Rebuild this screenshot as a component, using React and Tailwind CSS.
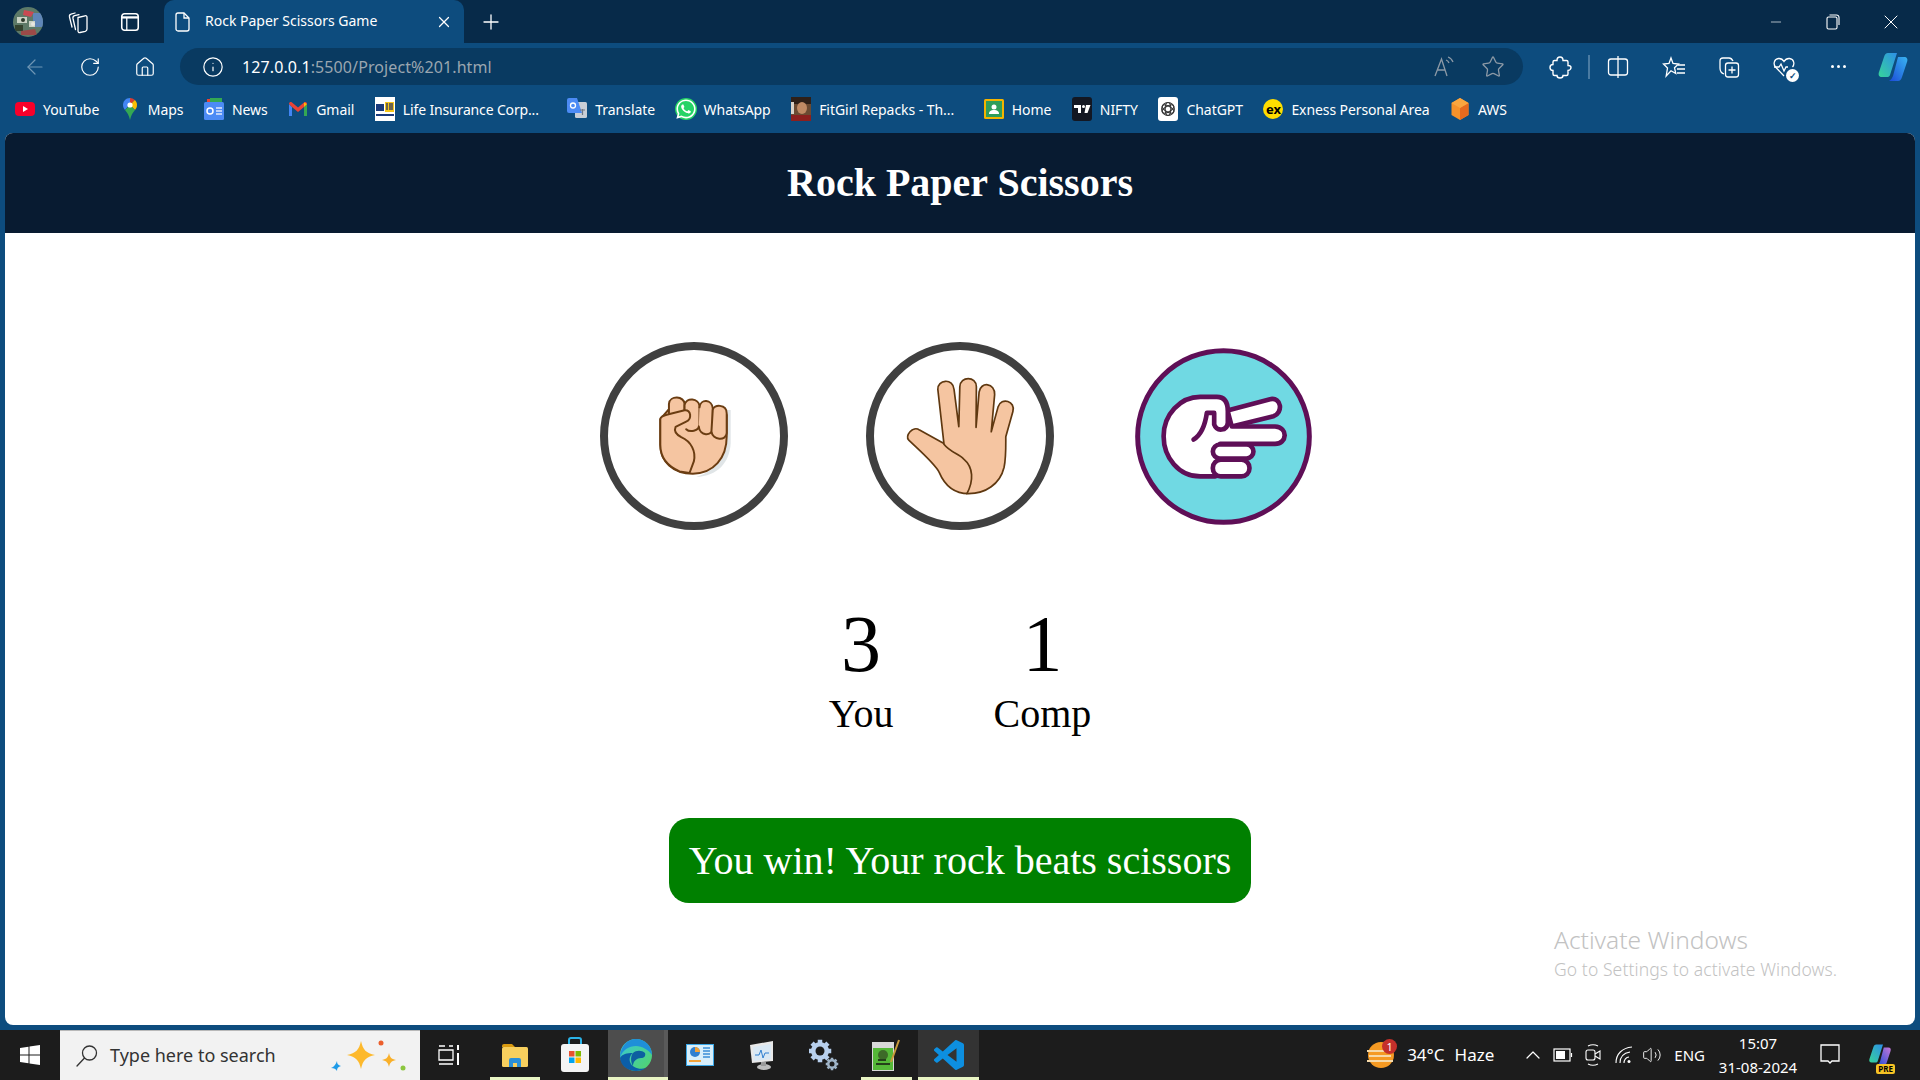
import {
  ArrowLeft,
  RotateCw,
  House,
  Info,
  Star,
  X,
  Plus,
  Minus,
  ChevronUp,
  Volume2,
} from "lucide-react";
import { FaWhatsapp } from "react-icons/fa";

const bookmarks = [
  { label: "YouTube", icon: <YouTubeIcon /> },
  { label: "Maps", icon: <MapsIcon /> },
  { label: "News", icon: <NewsIcon /> },
  { label: "Gmail", icon: <GmailIcon /> },
  { label: "Life Insurance Corp...", icon: <LicIcon />, labelClass: "w-[144px] tracking-[-0.15px]" },
  { label: "Translate", icon: <TranslateIcon /> },
  { label: "WhatsApp", icon: <WhatsAppIcon /> },
  { label: "FitGirl Repacks - Th...", icon: <FitGirlIcon />, labelClass: "w-[144px]" },
  { label: "Home", icon: <ClassroomIcon /> },
  { label: "NIFTY", icon: <NiftyIcon /> },
  { label: "ChatGPT", icon: <ChatGptIcon /> },
  { label: "Exness Personal Area", icon: <ExnessIcon />, labelClass: "tracking-[-0.1px]" },
  { label: "AWS", icon: <AwsIcon /> },
];

function YouTubeIcon() {
  return (
    <svg viewBox="0 0 20 20" className="h-5 w-5">
      <rect x="0" y="3" width="20" height="14" rx="4" fill="#f8002a" />
      <path d="M8 7l5 3-5 3z" fill="#fff" />
    </svg>
  );
}

function MapsIcon() {
  return (
    <svg viewBox="0 0 20 24" className="h-6 w-5">
      <path d="M10 1C5.500 1 3 4.400 3 8c0 2 .9 3.600 2 5l5-6 1-6z" fill="#4285f4" />
      <path d="M10 1c1.800 0 3.600.7 4.800 2L10 8z" fill="#d93a30" />
      <path d="M14.800 3C16.300 4.200 17 6 17 8c0 2-.8 3.500-2 5l-5-5z" fill="#fbbc04" />
      <path d="M5 13l5-5 5 5c-2 2.600-4 5-5 10-1-5-3-7.400-5-10z" fill="#34a853" />
      <circle cx="10" cy="8" r="2.600" fill="#fff" />
    </svg>
  );
}

function NewsIcon() {
  return (
    <svg viewBox="0 0 20 24" className="h-6 w-5">
      <path d="M3 2h14v6H3z" fill="#ea4335" />
      <path d="M6 1h12v5H6z" fill="#34a853" />
      <rect x="0" y="5" width="20" height="18" rx="1.500" fill="#4c8bf5" />
      <circle cx="6" cy="14" r="3" fill="none" stroke="#fff" strokeWidth="1.500" />
      <path d="M12 11h6M12 14h6M12 17h6" stroke="#dfe9fb" strokeWidth="1.500" />
    </svg>
  );
}

function GmailIcon() {
  return (
    <svg viewBox="0 0 20 20" className="h-5 w-5">
      <path d="M1 5v12h3V8z" fill="#4285f4" />
      <path d="M16 8v9h3V5z" fill="#34a853" />
      <path d="M1 5c0-2 2-2.500 3-1.500l6 5 6-5c1-1 3-.5 3 1.500l-3 3-6 5-6-5z" fill="#ea4335" />
      <path d="M16 3.500L19 5l-3 3z" fill="#fbbc04" />
    </svg>
  );
}

function LicIcon() {
  return (
    <svg viewBox="0 0 20 24" className="h-6 w-5">
      <rect width="20" height="24" fill="#fff" />
      <rect x="1" y="7" width="8" height="7" fill="#1a3a7c" />
      <rect x="10" y="5" width="9" height="10" fill="#f5c518" />
      <path d="M12 6v7M15 6v7M17 6v7" stroke="#22306b" strokeWidth="1.300" />
      <rect x="1" y="17" width="18" height="2" fill="#1a3a7c" />
    </svg>
  );
}

function TranslateIcon() {
  return (
    <svg viewBox="0 0 20 24" className="h-6 w-5">
      <rect x="8" y="5" width="12" height="16" rx="1.500" fill="#c9ced6" />
      <path d="M0 3a2 2 0 012-2h8l5 15H2a2 2 0 01-2-2z" fill="#4c8bf5" />
      <circle cx="6" cy="8.500" r="2.500" fill="none" stroke="#fff" strokeWidth="1.300" />
      <path d="M13 13h5M15.500 12v6" stroke="#6f7782" strokeWidth="1.200" />
    </svg>
  );
}

function WhatsAppIcon() {
  return (
    <div className="flex h-[22px] w-[22px] items-center justify-center rounded-full bg-[#25d366]">
      <FaWhatsapp className="h-[22px] w-[22px] text-white" />
    </div>
  );
}

function FitGirlIcon() {
  return (
    <svg viewBox="0 0 20 24" className="h-6 w-5">
      <rect width="20" height="24" fill="#6b4a32" />
      <rect y="0" width="20" height="7" fill="#2f2018" />
      <ellipse cx="11" cy="11" rx="5" ry="6" fill="#c08a64" />
      <rect x="0" y="18" width="20" height="6" fill="#8c1f1e" />
      <rect x="0" y="5" width="3" height="12" fill="#d9d2c8" />
    </svg>
  );
}

function ClassroomIcon() {
  return (
    <svg viewBox="0 0 20 20" className="h-5 w-5">
      <rect width="20" height="20" rx="1.500" fill="#f4b400" />
      <rect x="2" y="2" width="16" height="16" fill="#2f9e5b" />
      <circle cx="10" cy="8" r="2.500" fill="#fff" />
      <path d="M5 15c0-3 2-4 5-4s5 1 5 4z" fill="#fff" />
    </svg>
  );
}

function NiftyIcon() {
  return (
    <div className="flex h-6 w-5 items-center justify-center rounded-[3px] bg-[#131722]">
      <svg viewBox="0 0 20 24" className="h-6 w-5">
        <path d="M2 8h7v8H6v-5H2z" fill="#fff" />
        <circle cx="11.500" cy="9.500" r="1.500" fill="#fff" />
        <path d="M14 8h4.500l-3 8h-3z" fill="#fff" />
      </svg>
    </div>
  );
}

function ChatGptIcon() {
  return (
    <div className="flex h-6 w-5 items-center justify-center rounded-[3px] bg-white">
      <svg viewBox="0 0 20 20" className="h-4 w-4" fill="none" stroke="#333" strokeWidth="1.300">
        <circle cx="10" cy="10" r="8" />
        <ellipse cx="10" cy="10" rx="3.500" ry="8" />
        <ellipse cx="10" cy="10" rx="3.500" ry="8" transform="rotate(60 10 10)" />
        <ellipse cx="10" cy="10" rx="3.500" ry="8" transform="rotate(120 10 10)" />
      </svg>
    </div>
  );
}

function ExnessIcon() {
  return (
    <div className="flex h-5 w-5 items-center justify-center rounded-full bg-[#ffdd00] text-[13px] leading-none font-bold text-black">
      ex
    </div>
  );
}

function AwsIcon() {
  return (
    <svg viewBox="0 0 20 24" className="h-6 w-5">
      <path d="M10 1l8.500 5v12L10 23l-8.500-5V6z" fill="#f7922a" />
      <path d="M10 11l8.500-5v12L10 23z" fill="#e76a1f" />
      <path d="M10 1l8.500 5L10 11 1.500 6z" fill="#fba63f" />
    </svg>
  );
}

function AvatarIcon() {
  return (
    <svg viewBox="0 0 30 30" className="h-[30px] w-[30px]">
      <defs>
        <clipPath id="avatarclip">
          <circle cx="15" cy="15" r="15" />
        </clipPath>
      </defs>
      <g clipPath="url(#avatarclip)">
        <rect width="30" height="30" fill="#5d7a68" />
        <rect x="20" y="6" width="10" height="14" fill="#5f86b8" />
        <path d="M11 3l10 2-3 5-8-2z" fill="#c94a52" />
        <path d="M4 10h10v6H4zM16 14h6v6h-6z" fill="#c9d2c4" />
        <path d="M2 18h8v6H2z" fill="#33432f" />
        <path d="M8 24l14-2 2 6H8z" fill="#9c4a48" />
        <circle cx="10" cy="13" r="2" fill="#2e3a2c" />
        <circle cx="20" cy="17" r="2" fill="#e7e7e0" />
      </g>
    </svg>
  );
}

function WorkspacesIcon() {
  return (
    <svg viewBox="0 0 24 24" className="h-6 w-6" fill="none" stroke="#fff" strokeWidth="1.300" strokeLinecap="round">
      <path d="M6 17L3.500 7c-.3-1.500.3-2.500 1.500-2.800L9 3" />
      <path d="M9.500 19.500L7 8.500C6.700 7 7.400 6 8.600 5.700L13 4.600" />
      <path d="M12 7.500L19 5.800C20.300 5.500 21 6.100 21 7.400V19C21 20.300 20.300 21 19.300 21.300L14 22.500C12.700 22.800 12 22 12 20.800z" />
    </svg>
  );
}

function VerticalTabsIcon() {
  return (
    <svg viewBox="0 0 24 24" className="h-[22px] w-[22px]" fill="none" stroke="#fff">
      <rect x="3" y="3" width="18" height="18" rx="3" strokeWidth="1.700" />
      <path d="M3 7h18" strokeWidth="2.500" />
      <path d="M8.500 7v14" strokeWidth="1.400" />
    </svg>
  );
}

function PageIcon() {
  return (
    <svg viewBox="0 0 16 20" className="h-5 w-4" fill="none" stroke="#fff" strokeWidth="1.300">
      <path d="M3 1h6l5 5v11a2 2 0 01-2 2H3a2 2 0 01-2-2V3a2 2 0 012-2z" />
      <path d="M9 1v5h5" />
    </svg>
  );
}

function RestoreIcon() {
  return (
    <svg viewBox="0 0 14 16" className="h-4 w-[14px]" fill="none" stroke="#fff" strokeWidth="1.100">
      <rect x="1" y="3" width="10" height="12" rx="1.500" />
      <path d="M3.500 1h7A2.500 2.500 0 0113 3.500V11" />
    </svg>
  );
}

function ReadAloudIcon() {
  return (
    <svg viewBox="0 0 24 24" className="h-6 w-6" fill="none" stroke="#8c99a6" strokeWidth="1.300">
      <path d="M3 21L9.500 4 15 21M5.500 15h7.500" />
      <path d="M14 5c1.500.5 2.500 1.600 3 3M16 2c2.500.8 4 2.500 5 5" />
    </svg>
  );
}

function ExtensionIcon() {
  return (
    <svg viewBox="0 0 24 24" className="h-6 w-6" fill="none" stroke="#fff" strokeWidth="1.400">
      <path d="M9 5.500C9 3 10.500 2 12 2s3 1 3 3.500h3.500c1 0 1.500.6 1.500 1.500v3.500c2 0 3 1 3 2s-1 3-3 3V19c0 1-.6 1.500-1.500 1.500H15c0 1.500-1 2.500-3 2.500s-3-1-3-2.500H6.500C5.500 20.500 5 20 5 19v-3.500c-2 0-3-1.500-3-3s1-3 3-3V7c0-1 .5-1.500 1.500-1.500z" />
    </svg>
  );
}

function SplitIcon() {
  return (
    <svg viewBox="0 0 24 24" className="h-6 w-6" fill="none" stroke="#fff" strokeWidth="1.300">
      <rect x="2.500" y="4" width="19" height="16" rx="2.500" />
      <path d="M12 1v22" />
    </svg>
  );
}

function FavoritesIcon() {
  return (
    <svg viewBox="0 0 24 24" className="h-6 w-6" fill="none" stroke="#fff" strokeWidth="1.300">
      <path d="M9 3l2 5.500 5.500.5-4 3.800 1.300 5.700L9 15.800 4.200 21 5.500 13 1.500 9l5.500-.5z" />
      <path d="M16 10h7M15 14h8M15 18h8" />
    </svg>
  );
}

function CollectionsIcon() {
  return (
    <svg viewBox="0 0 24 24" className="h-6 w-6" fill="none" stroke="#fff" strokeWidth="1.300">
      <path d="M7 19C4 18 3 16 3 13V6c0-2 1-3 3-3h6c2 0 3 1 4 3" />
      <rect x="8.500" y="8" width="13" height="14" rx="2.500" />
      <path d="M15 11.500v7M11.500 15h7" />
    </svg>
  );
}

function HealthIcon() {
  return (
    <div className="relative h-6 w-6">
      <svg viewBox="0 0 24 24" className="h-6 w-6" fill="none" stroke="#fff" strokeWidth="1.300">
        <path d="M12 21L3.500 12C1 9 2 4 6.500 3.500 9 3.300 11 4.800 12 6.500c1-1.700 3-3.200 5.500-3 4.500.5 5.500 5.500 3 8.500" />
        <path d="M2 12h5l2-3 3 7 2-4h2" />
      </svg>
      <div className="absolute right-[-3px] bottom-[-3px] flex h-[13px] w-[13px] items-center justify-center rounded-full bg-white text-[9px] leading-none font-bold text-[#0d4c7e]">
        ✓
      </div>
    </div>
  );
}

function CopilotMark({ id, to }) {
  return (
    <svg viewBox="0 0 32 32" className="h-full w-full">
      <defs>
        <linearGradient id={`${id}a`} x1="0" y1="1" x2="1" y2="0">
          <stop offset="0" stopColor="#36d39a" />
          <stop offset="1" stopColor="#2d8fe8" />
        </linearGradient>
        <linearGradient id={`${id}b`} x1="0" y1="1" x2="1" y2="0">
          <stop offset="0" stopColor="#1b4bd8" />
          <stop offset="1" stopColor={to} />
        </linearGradient>
      </defs>
      <path d="M11 2h9l-7 22c-.5 1.500-1.500 2-3 2H5c-3 0-4-2-3-5l5-15c.8-2.500 2-4 4-4z" fill={`url(#${id}a)`} />
      <path d="M21 6h6c3 0 4 2 3 5l-5 15c-.8 2.500-2 4-4 4h-9c2-1 3-3 4-5z" fill={`url(#${id}b)`} />
    </svg>
  );
}

function WindowsLogo() {
  return (
    <svg viewBox="0 0 20 20" className="h-5 w-5" fill="#fff">
      <path d="M0 3l8.500-1.200v7.700H0zM9.500 1.600L20 0v9.500H9.500zM0 10.500h8.500v7.700L0 17zM9.500 10.500H20V20L9.500 18.400z" />
    </svg>
  );
}

function SearchGlass() {
  return (
    <svg viewBox="0 0 24 24" className="h-6 w-6" fill="none" stroke="#333" strokeWidth="1.300" strokeLinecap="round">
      <circle cx="14.500" cy="9" r="7" />
      <path d="M9.500 14L2 22" />
    </svg>
  );
}

function SparkleIcon() {
  return (
    <svg viewBox="0 0 76 40" className="h-10 w-[76px]">
      <path d="M31 5c2 9 5 12 14 14-9 2-12 5-14 14-2-9-5-12-14-14 9-2 12-5 14-14z" fill="#fdb92c" />
      <path d="M59 17c1 4 2 6 7 7-5 1-6 3-7 7-1-4-2-6-7-7 5-1 6-3 7-7z" fill="#f9b02a" />
      <circle cx="51" cy="7" r="2.500" fill="#ec5f2c" />
      <circle cx="73" cy="32" r="2.500" fill="#8cc63f" />
      <path d="M7 25c0 3 1 4 4 5-3 1-4 2-4 5-1-2-3-3-6-3 3-1 5-4 6-7z" fill="#1e9be8" />
    </svg>
  );
}

function TaskViewIcon() {
  return (
    <svg viewBox="0 0 22 24" className="h-6 w-[22px]" fill="none" stroke="#fff" strokeWidth="1.300">
      <path d="M1 3h6M1 21h14M11 3h4M1 7h14v10H1z" />
      <path d="M20 2v5M20 10v12" strokeWidth="2" />
    </svg>
  );
}

function ExplorerIcon() {
  return (
    <svg viewBox="0 0 28 26" className="h-[26px] w-7">
      <path d="M1 4a2 2 0 012-2h8l3 3H1z" fill="#d99a10" />
      <rect x="1" y="5" width="26" height="20" rx="1.500" fill="#f7cf5e" />
      <path d="M8 25v-7a2 2 0 012-2h8a2 2 0 012 2v7h-4v-4h-4v4z" fill="#2a8fd8" />
    </svg>
  );
}

function StoreIcon() {
  return (
    <svg viewBox="0 0 30 36" className="h-9 w-[30px]">
      <path d="M9 8V3a2 2 0 012-2h8a2 2 0 012 2v5" fill="none" stroke="#2bb3e8" strokeWidth="2" />
      <rect x="1" y="7" width="28" height="28" rx="3" fill="#f4f4f4" />
      <rect x="9" y="14" width="5.500" height="5.500" fill="#e8512f" />
      <rect x="15.500" y="14" width="5.500" height="5.500" fill="#7fba00" />
      <rect x="9" y="20.500" width="5.500" height="5.500" fill="#00a4ef" />
      <rect x="15.500" y="20.500" width="5.500" height="5.500" fill="#ffb900" />
    </svg>
  );
}

function EdgeIcon() {
  return (
    <svg viewBox="0 0 34 34" className="h-[34px] w-[34px]">
      <defs>
        <linearGradient id="edgea" x1="0" y1="0" x2="1" y2="1">
          <stop offset="0" stopColor="#38c8d8" />
          <stop offset="1" stopColor="#54d466" />
        </linearGradient>
      </defs>
      <circle cx="17" cy="17" r="16" fill="url(#edgea)" />
      <path d="M1 20c2-8 9-12 16-12 6 0 13 4 16 9 0-9-7-16-16-16S1 9 1 20z" fill="#1f8fd8" />
      <path d="M1 20c1 8 8 13 16 13 4 0 8-1 10-3-6 2-14 0-16-6-1-3 0-7 3-9-6 0-11 1-13 5z" fill="#0b5ea8" />
      <path d="M14 15c3-3 9-3 12 0 1 3-1 5-4 5-4 0-8 3-8 8-2-3-3-9 0-13z" fill="#0d5fa0" />
    </svg>
  );
}

function ControlPanelIcon() {
  return (
    <svg viewBox="0 0 28 22" className="h-[22px] w-7">
      <rect width="28" height="22" fill="#3aa8e8" />
      <rect x="1" y="1" width="26" height="20" fill="#d8effb" />
      <circle cx="9" cy="8" r="5" fill="#2f7fd0" />
      <path d="M9 3a5 5 0 015 5H9z" fill="#f2a33a" />
      <path d="M17 4h7M17 7h7M17 10h7M17 13h7" stroke="#3a8ed8" strokeWidth="1.500" />
      <path d="M3 17h12" stroke="#f2a33a" strokeWidth="2" />
    </svg>
  );
}

function MonitorIcon() {
  return (
    <svg viewBox="0 0 28 32" className="h-8 w-7">
      <path d="M3 6l23-4v20L5 24z" fill="#e8e8e8" />
      <path d="M6 8l18-3v15L7 22z" fill="#d9e8f4" />
      <path d="M8 16h4l2-5 2 8 2-5h4" fill="none" stroke="#2f7fd0" strokeWidth="1" />
      <ellipse cx="17" cy="28" rx="7" ry="3" fill="#bdbdbd" />
      <rect x="14" y="23" width="5" height="4" fill="#9a9a9a" />
    </svg>
  );
}

function Gear({ cx, cy, r, fill }) {
  const teeth = [0, 45, 90, 135];
  return (
    <g>
      {teeth.map((t) => (
        <rect key={t} x={cx - r * 0.25} y={cy - r * 1.25} width={r * 0.5} height={r * 2.5} fill={fill} transform={`rotate(${t} ${cx} ${cy})`} />
      ))}
      <circle cx={cx} cy={cy} r={r} fill={fill} />
      <circle cx={cx} cy={cy} r={r * 0.5} fill="#1c1c1c" />
    </g>
  );
}

function GearsIcon() {
  return (
    <svg viewBox="0 0 30 34" className="h-[34px] w-[30px]">
      <Gear cx={11} cy={13} r={9} fill="#b8d0ee" />
      <Gear cx={23} cy={26} r={5} fill="#9fb4c8" />
    </svg>
  );
}

function NotepadIcon() {
  return (
    <svg viewBox="0 0 30 34" className="h-[34px] w-[30px]">
      <rect x="2" y="4" width="22" height="29" fill="#d8d8d8" />
      <rect x="3" y="10" width="20" height="22" fill="#55b838" />
      <circle cx="13" cy="17" r="5" fill="#3d6a28" />
      <path d="M6 26h14M8 22h8" stroke="#24401a" strokeWidth="2" />
      <path d="M21 24L29 2" stroke="#c89a3a" strokeWidth="2" />
    </svg>
  );
}

function VsCodeIcon() {
  return (
    <svg viewBox="0 0 24 24" className="h-[30px] w-[30px]" fill="#0d8fe0">
      <path d="M23.150 2.587L18.210.21a1.494 1.494 0 0 0-1.705.29l-9.460 8.630-4.120-3.128a.999.999 0 0 0-1.276.057L.327 7.261A1 1 0 0 0 .326 8.740L3.899 12 .326 15.260a1 1 0 0 0 .001 1.479L1.650 17.940a.999.999 0 0 0 1.276.057l4.120-3.128 9.460 8.630a1.492 1.492 0 0 0 1.704.29l4.942-2.377A1.500 1.500 0 0 0 24 20.060V3.939a1.500 1.500 0 0 0-.85-1.352zm-5.146 14.861L10.826 12l7.178-5.448v10.896z" />
    </svg>
  );
}

function WeatherIcon() {
  return (
    <div className="relative h-8 w-7">
      <svg viewBox="0 0 28 32" className="h-8 w-7">
        <circle cx="14" cy="16" r="13" fill="#f59a23" />
        <path d="M0 12h20M2 17h22M0 22h26" stroke="#f6d9a8" strokeWidth="2" />
      </svg>
      <div className="absolute top-0 right-[-2px] flex h-[15px] w-[15px] items-center justify-center rounded-full bg-[#c4302b] text-[11px] leading-none text-white">
        1
      </div>
    </div>
  );
}

function BatteryIcon() {
  return (
    <svg viewBox="0 0 20 14" className="h-[14px] w-5" fill="none" stroke="#fff" strokeWidth="1.200">
      <rect x="1" y="1" width="16" height="12" />
      <rect x="3" y="3" width="9" height="8" fill="#fff" stroke="none" />
      <path d="M18.500 5v4" />
    </svg>
  );
}

function CameraIcon() {
  return (
    <svg viewBox="0 0 16 24" className="h-6 w-4" fill="none" stroke="#fff" strokeWidth="1.100">
      <path d="M3 3c3-1.500 7-1.500 10 0M3 21c3 1.500 7 1.500 10 0" />
      <rect x="1" y="7" width="9" height="10" rx="2" />
      <path d="M10 11l5-3v8l-5-3" />
    </svg>
  );
}

function WifiIcon() {
  return (
    <svg viewBox="0 0 18 18" className="h-[18px] w-[18px]" fill="none" stroke="#fff" strokeWidth="1.100">
      <path d="M1 17C1 8 7 2 17 1M5 17c0-6 4-10 10-11M9 17c0-3 2-6 5-6" />
      <circle cx="14" cy="15.500" r="1.500" fill="#fff" stroke="none" />
    </svg>
  );
}

function NotificationIcon() {
  return (
    <svg viewBox="0 0 20 22" className="h-[22px] w-5" fill="none" stroke="#fff" strokeWidth="1.300">
      <path d="M1 1h18v16h-7l-2 2-2-2H1z" />
    </svg>
  );
}

function ChoiceCircle({ children }) {
  return (
    <div className="flex h-[188px] w-[188px] shrink-0 items-center justify-center rounded-full border-8 border-[#404040]">
      {children}
    </div>
  );
}

// traced from the zoomed reference, so the viewBox is in crop coordinates
function RockHand() {
  return (
    <svg viewBox="200 195 230 250" className="ml-[1px] h-[83px] w-[77px]" stroke="#6b3d12" strokeWidth="6" strokeLinejoin="round" strokeLinecap="round">
      <path d="M424 240V340C420 400 385 438 320 442C375 425 412 385 414 320V240z" fill="#d3dadd" stroke="none" opacity="0.7" />
      <path d="M212 268V345C212 395 250 432 310 432C372 432 412 385 412 320V255L240 235z" fill="#f5c5a1" />
      <path d="M238 250V222C240 195 285 198 285 222V250" fill="#f5c5a1" />
      <path d="M285 240V225C290 200 328 205 330 228V285C328 305 300 308 290 298" fill="#f5c5a1" />
      <path d="M330 232C333 205 368 208 370 235V295C368 322 330 318 328 290" fill="#f5c5a1" />
      <path d="M370 240C372 222 412 222 412 250V310C410 335 370 332 366 305z" fill="#f5c5a1" />
      <path d="M212 268C212 260 225 255 240 252L285 241C305 238 308 268 290 275L258 291C252 305 262 315 275 322C305 335 320 365 313 395L300 430L270 425C235 410 212 385 212 345z" fill="#f5c5a1" />
    </svg>
  );
}

function PaperHand() {
  return (
    <svg viewBox="945 140 335 355" className="ml-[1px] mt-[-1px] h-[120px] w-[114px]" stroke="#5f3810" strokeWidth="5" strokeLinejoin="round" strokeLinecap="round">
      <path
        d="M1062 340L1044 180C1042 150 1090 145 1092 180L1106 290L1109 172C1110 140 1158 140 1158 172L1157 292L1166 188C1170 155 1214 160 1212 195L1202 305L1222 232C1232 200 1275 215 1266 245L1245 320C1245 350 1246 380 1240 410C1228 460 1185 488 1135 488C1095 488 1065 465 1048 425C1035 400 1000 370 958 330C945 318 970 285 990 300z"
        fill="#f5c5a1"
      />
      <path d="M1062 342C1080 365 1105 370 1120 385C1150 410 1150 450 1130 488" fill="none" />
    </svg>
  );
}

function ScissorsHand() {
  return (
    <svg viewBox="75 50 530 532" className="h-[177px] w-[177px] shrink-0">
      <circle cx="340" cy="316" r="258" fill="#70d9e3" stroke="#5f0f57" strokeWidth="15" />
      <g stroke="#5f0f57" strokeWidth="14" strokeLinejoin="round" strokeLinecap="round">
        <path d="M352 238L480 204C515 196 520 245 490 255L365 286z" fill="#fff" />
        <path d="M315 436H270C205 436 160 378 160 315C160 250 210 197 270 197H320C345 197 353 215 353 240V338H330V436z" fill="#fff" stroke="none" />
        <path d="M340 286H495C535 288 532 338 495 338H330V286z" fill="#fff" stroke="none" />
        <path d="M365 286H495C535 288 532 338 495 338H330" fill="none" />
        <path d="M315 436H270C205 436 160 378 160 315C160 250 210 197 270 197H320C345 197 353 215 353 240V275C350 300 320 302 312 280V245H290C285 280 275 310 250 325" fill="none" />
        <rect x="308" y="340" width="122" height="42" rx="21" fill="#fff" />
        <rect x="308" y="386" width="110" height="50" rx="24" fill="#fff" />
      </g>
    </svg>
  );
}

function Score({ value, label }) {
  return (
    <div className="flex flex-col items-center">
      <p className="text-[80px] leading-[93px]">{value}</p>
      <p className="text-[40px] leading-[46px]">{label}</p>
    </div>
  );
}

function TaskCell({ width, active, open, children }) {
  return (
    <div className={`relative flex h-full shrink-0 items-center justify-center ${width} ${active || ""}`}>
      {children}
      {open && <div className={`absolute bottom-0 h-[3px] bg-[#e9f5c4] ${open}`} />}
    </div>
  );
}

export default function App() {
  return (
    <div className="flex h-[1080px] w-[1920px] flex-col overflow-hidden bg-[#0d4c7e] font-['Noto_Sans',sans-serif] text-white">
      {/* title bar */}
      <div className="flex h-[43px] shrink-0 items-center bg-[#072a49]">
        <div className="flex w-[56px] justify-center"><AvatarIcon /></div>
        <div className="flex w-[44px] justify-center"><WorkspacesIcon /></div>
        <div className="flex w-[60px] justify-center"><VerticalTabsIcon /></div>
        <div className="ml-[4px] flex h-full w-[300px] items-center rounded-t-[10px] bg-[#0d4c7e] pl-[11px]">
          <PageIcon />
          <span className="mb-[2px] ml-[14px] flex-1 text-[14px]">Rock Paper Scissors Game</span>
          <X className="mr-[11px] h-[18px] w-[18px]" strokeWidth={1.6} />
        </div>
        <div className="ml-[4px] flex w-[46px] justify-center"><Plus className="h-6 w-6" strokeWidth={1.3} /></div>
        <div className="flex-1" />
        <div className="flex w-[56px] justify-center"><Minus className="h-[16px] w-[16px]" strokeWidth={1} /></div>
        <div className="flex w-[58px] justify-center"><RestoreIcon /></div>
        <div className="flex w-[58px] justify-center"><X className="h-6 w-6" strokeWidth={1} /></div>
      </div>

      {/* toolbar */}
      <div className="flex h-[42px] shrink-0 items-end pl-[8px]">
        <div className="flex h-[37px] w-[54px] items-center justify-center"><ArrowLeft className="h-6 w-6 text-[#6f96b4]" strokeWidth={1.2} /></div>
        <div className="flex h-[37px] w-[56px] items-center justify-center"><RotateCw className="h-[22px] w-[22px]" strokeWidth={1.3} /></div>
        <div className="flex h-[37px] w-[54px] items-center justify-center"><House className="h-[22px] w-[22px]" strokeWidth={1.3} /></div>
        <div className="ml-[8px] flex h-[37px] w-[1343px] items-center rounded-full bg-[#093a61] pl-[22px]">
          <Info className="h-[22px] w-[22px]" strokeWidth={1.3} />
          <span className="ml-[18px] flex-1 text-[16px] tracking-[0.1px]">
            127.0.0.1<span className="text-[#9aa6b0]">:5500/Project%201.html</span>
          </span>
          <div className="mr-[25px]"><ReadAloudIcon /></div>
          <Star className="mr-[18px] h-6 w-6 text-[#8c99a6]" strokeWidth={1.3} />
        </div>
        <div className="ml-[9px] flex h-[37px] w-[56px] items-center justify-center"><ExtensionIcon /></div>
        <div className="flex h-[37px] items-center"><div className="h-[24px] w-[2px] bg-[#4a7ba2]" /></div>
        <div className="flex h-[37px] w-[56px] items-center justify-center"><SplitIcon /></div>
        <div className="flex h-[37px] w-[56px] items-center justify-center"><FavoritesIcon /></div>
        <div className="flex h-[37px] w-[54px] items-center justify-center"><CollectionsIcon /></div>
        <div className="flex h-[37px] w-[56px] items-center justify-center"><HealthIcon /></div>
        <div className="flex h-[37px] w-[52px] items-center justify-center gap-[3px]">
          <div className="h-[3px] w-[3px] rounded-full bg-white" />
          <div className="h-[3px] w-[3px] rounded-full bg-white" />
          <div className="h-[3px] w-[3px] rounded-full bg-white" />
        </div>
        <div className="flex h-[37px] w-[52px] items-center justify-center pl-[6px]">
          <div className="h-8 w-8"><CopilotMark id="cpt" to="#39b4f0" /></div>
        </div>
      </div>

      {/* favorites bar */}
      <div className="flex h-[48px] shrink-0 items-center gap-[20.5px] pl-[15px] text-[14px] tracking-[-0.05px]">
        {bookmarks.map((b) => (
          <div key={b.label} className="flex items-center gap-[8px]">
            <div className="flex w-5 justify-center">{b.icon}</div>
            <span className={`whitespace-nowrap ${b.labelClass || ""}`}>{b.label}</span>
          </div>
        ))}
      </div>

      {/* page */}
      <div className="relative mx-[5px] mb-[5px] flex-1 overflow-hidden rounded-[8px] bg-white font-['Liberation_Serif',serif] text-black">
        <div className="flex h-[100px] items-center justify-center bg-[#081b31] text-[40px] font-bold text-white">
          Rock Paper Scissors
        </div>
        <div className="flex items-center justify-center pt-[109px] pr-[8px]">
          <ChoiceCircle><RockHand /></ChoiceCircle>
          <div className="w-[78px]" />
          <ChoiceCircle><PaperHand /></ChoiceCircle>
          <div className="w-[81px]" />
          <ScissorsHand />
        </div>
        <div className="mt-[68px] flex justify-center gap-[100px]">
          <Score value="3" label="You" />
          <Score value="1" label="Comp" />
        </div>
        <div className="mt-[81px] flex justify-center">
          <div className="rounded-[20px] bg-[#008000] p-[20px] text-[40px] leading-[45px] text-white">
            You win! Your rock beats scissors
          </div>
        </div>
        <div className="absolute top-[790px] left-[1549px] font-['Noto_Sans',sans-serif] font-light text-[#c2c2c2]">
          <p className="text-[24.500px] leading-[34px]">Activate Windows</p>
          <p className="text-[17.500px] leading-[24px] tracking-[0.1px]">Go to Settings to activate Windows.</p>
        </div>
      </div>

      {/* taskbar */}
      <div className="flex h-[50px] shrink-0 items-center bg-[#1c1c1c]">
        <div className="flex h-full w-[60px] items-center justify-center"><WindowsLogo /></div>
        <div className="flex h-full w-[360px] items-center border-t border-[#b8b8b8] bg-[#f2f2f2] pl-[15px] text-[#333]">
          <SearchGlass />
          <span className="ml-[11px] flex-1 text-[18px]">Type here to search</span>
          <div className="mr-[14px]"><SparkleIcon /></div>
        </div>
        <TaskCell width="w-[58px]"><TaskViewIcon /></TaskCell>
        <div className="w-[8px]" />
        <TaskCell width="w-[58px]" open="right-[4px] left-[4px]"><ExplorerIcon /></TaskCell>
        <TaskCell width="w-[62px]"><StoreIcon /></TaskCell>
        <div className="w-[2px]" />
        <TaskCell width="w-[60px]" active="border-r-[4px] border-[#5a5a5a] bg-[#4d4d4d]" open="right-[-4px] left-0"><EdgeIcon /></TaskCell>
        <TaskCell width="w-[64px]"><ControlPanelIcon /></TaskCell>
        <TaskCell width="w-[58px]"><MonitorIcon /></TaskCell>
        <TaskCell width="w-[68px]"><GearsIcon /></TaskCell>
        <TaskCell width="w-[54px]" open="right-0 left-[3px]"><NotepadIcon /></TaskCell>
        <div className="w-[6px]" />
        <TaskCell width="w-[61px]" active="bg-[#333333]" open="right-0 left-0"><VsCodeIcon /></TaskCell>
        <div className="flex-1" />
        <div className="flex items-center">
          <WeatherIcon />
          <span className="ml-[12px] text-[17px]">34°C</span>
          <span className="ml-[10px] text-[17px]">Haze</span>
        </div>
        <ChevronUp className="ml-[27px] h-6 w-6" strokeWidth={1.2} />
        <div className="ml-[8px]"><BatteryIcon /></div>
        <div className="ml-[12px]"><CameraIcon /></div>
        <div className="ml-[14px]"><WifiIcon /></div>
        <Volume2 className="ml-[9px] h-[20px] w-[20px]" strokeWidth={1.1} />
        <span className="ml-[12px] text-[15px]">ENG</span>
        <div className="ml-[10px] flex w-[86px] flex-col items-center text-[15px] leading-[24px]">
          <span>15:07</span>
          <span>31-08-2024</span>
        </div>
        <div className="ml-[19px]"><NotificationIcon /></div>
        <div className="relative mr-[28px] ml-[28px] h-6 w-6">
          <CopilotMark id="cps" to="#c778d8" />
          <div className="absolute right-[-3px] bottom-[-7px] rounded-[2px] bg-[#f7c325] px-[2px] text-[8px] leading-[10px] font-bold text-black">PRE</div>
        </div>
      </div>
    </div>
  );
}
